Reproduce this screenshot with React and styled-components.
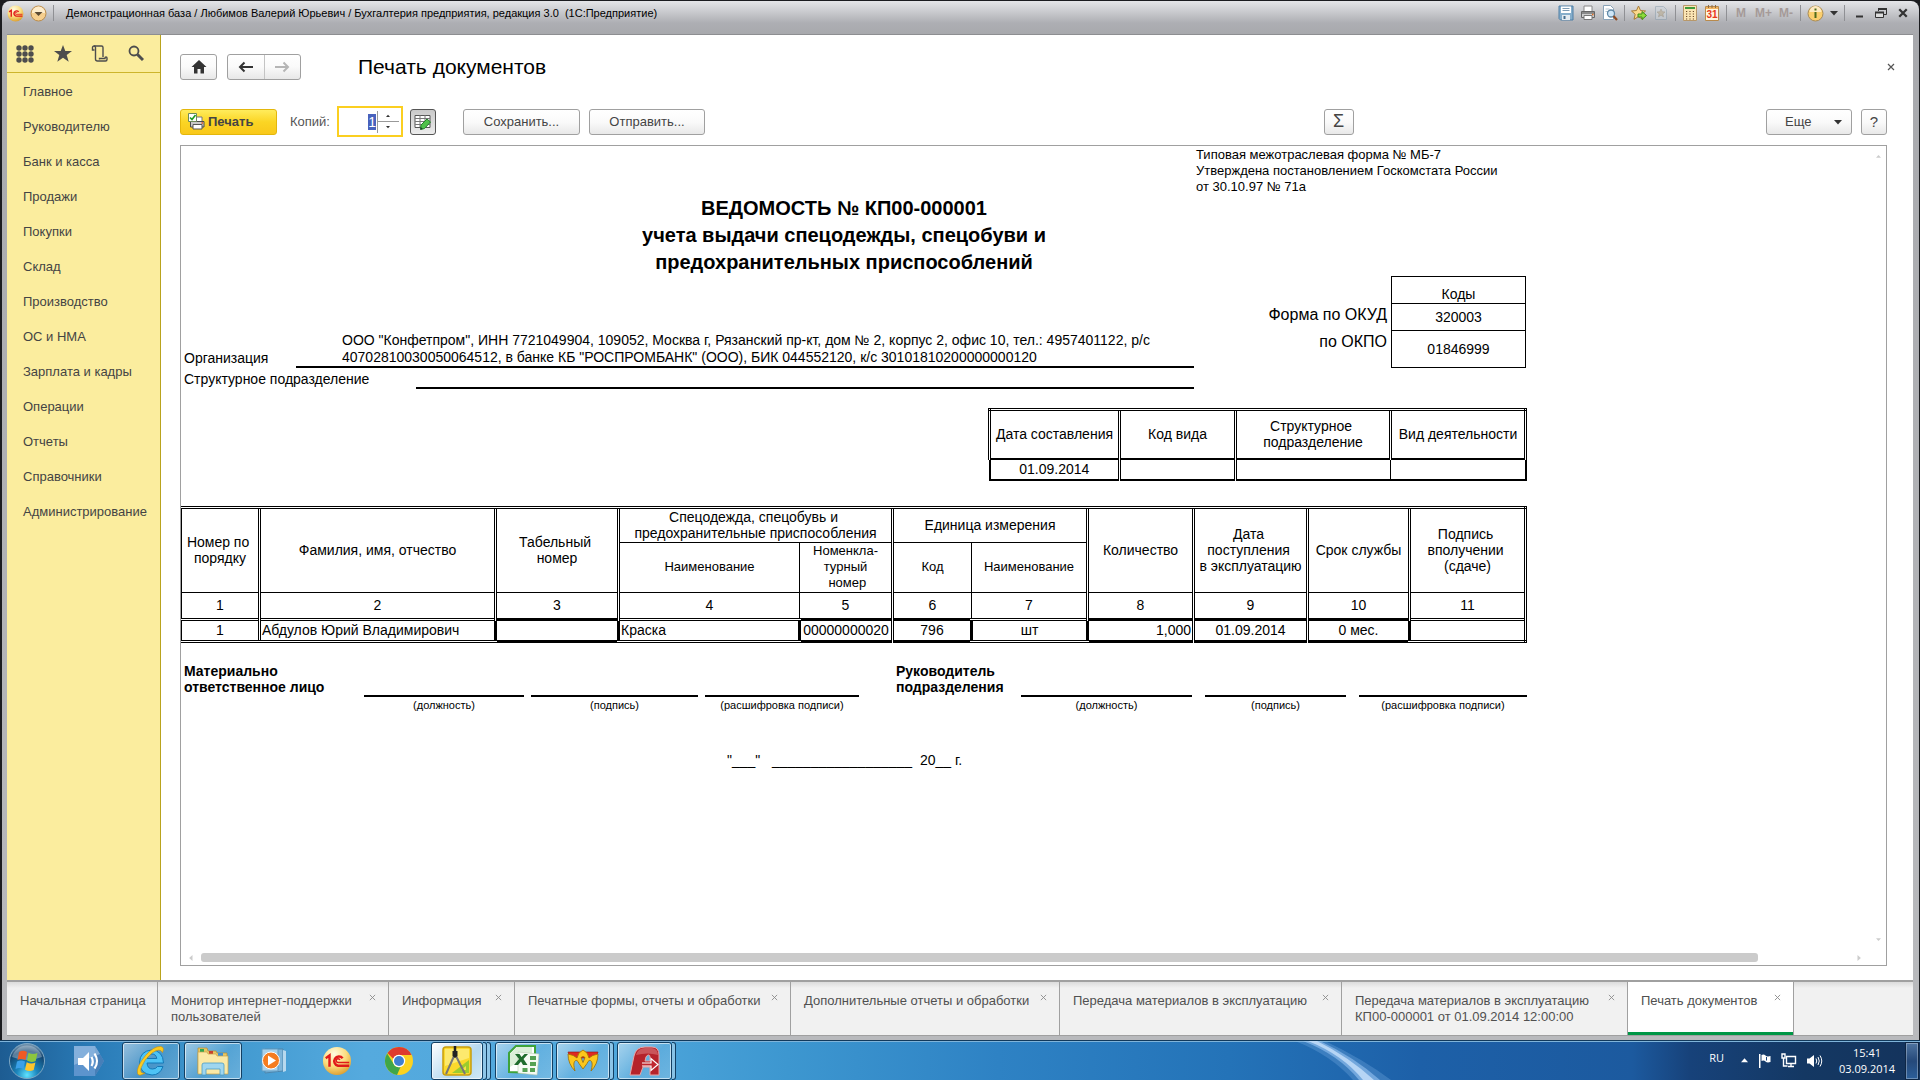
import React, { useEffect, useRef, useState } from "react";
import styled, { createGlobalStyle, css } from "styled-components";

const GlobalStyle = createGlobalStyle`
  * {
    box-sizing: border-box;
  }
  body {
    margin: 0;
    background: #1b1c1f;
    font-family: "Liberation Sans", Arial, sans-serif;
    font-size: 13px;
    color: #444;
  }
  button, input {
    font: inherit;
    color: inherit;
    margin: 0;
  }
  button {
    cursor: pointer;
  }
  svg {
    display: block;
    flex: none;
  }
`;

/* Window */

const Desktop = styled.div`
  height: 100vh;
  display: flex;
  flex-direction: column;
  overflow: hidden;
`;

const AppWindow = styled.div`
  flex: 1;
  min-height: 0;
  margin: 1px 1px 0 2px;
  padding: 0 6px 4px 5px;
  display: flex;
  flex-direction: column;
  border-radius: 8px 8px 0 0;
  background: linear-gradient(#e4e5e8 0, #cbccd0 10px, #adaeb3 22px, #a8a9ad 33px, #b9babd 100%);
`;

const TitleBar = styled.header`
  height: 33px;
  padding: 0 0 9px;
  display: flex;
  align-items: center;
  gap: 6px;
  font-size: 11px;
  color: #000;
`;

const TitleText = styled.span`
  flex: 1;
  white-space: pre;
`;

const TitleSep = styled.span`
  width: 1px;
  height: 16px;
  background: #8f9094;
`;

const TitleTools = styled.div`
  display: flex;
  align-items: center;
  gap: 6px;
  padding-right: 2px;
`;

const ToolButton = styled.button`
  min-width: 16px;
  height: 20px;
  padding: 0;
  display: flex;
  align-items: center;
  justify-content: center;
  border: none;
  background: none;
  color: #a59a98;
  font-weight: bold;
  font-size: 12px;
`;

const Workspace = styled.div`
  flex: 1;
  min-height: 0;
  display: flex;
  border-top: 1px solid #8d8e91;
  background: #fff;
`;

/* Sidebar */

const Sidebar = styled.nav`
  width: 154px;
  flex: none;
  background: #fbed9e;
  border-right: 1px solid #b9a31d;
`;

const SidebarIcons = styled.div`
  height: 38px;
  padding: 0 16px 0 9px;
  display: flex;
  align-items: center;
  justify-content: space-between;
  border-bottom: 1px solid #cdb52c;
`;

const IconButton = styled.button`
  padding: 0;
  border: none;
  background: none;
`;

const SidebarList = styled.ul`
  list-style: none;
  margin: 0;
  padding: 1px 0 0 16px;
`;

const SidebarLink = styled.a`
  display: block;
  line-height: 35px;
  color: #444;
  text-decoration: none;
`;

/* Main form */

const Main = styled.main`
  flex: 1;
  min-width: 0;
  padding: 18px 26px 14px 19px;
  display: flex;
  flex-direction: column;
`;

const FormHeader = styled.div`
  height: 27px;
  display: flex;
  align-items: center;
  gap: 10px;
`;

const FormTitle = styled.h1`
  flex: 1;
  margin: 0 0 0 47px;
  font-size: 21px;
  line-height: 27px;
  font-weight: normal;
  color: #000;
`;

const buttonLook = css`
  height: 26px;
  border: 1px solid #a0a0a0;
  border-radius: 3px;
  background: linear-gradient(#fff, #fafafa 50%, #e8e8e8);
  display: flex;
  align-items: center;
  justify-content: center;
`;

const Button = styled.button`
  ${buttonLook}
  width: ${({ $width }) => $width}px;
  padding: 0;
  font-size: ${({ $size }) => $size || 13}px;
  ${({ $pressed }) =>
    $pressed &&
    css`
      border-color: #555;
      background: linear-gradient(#c9c9c9, #ececec);
    `}
`;

const PrintButton = styled(Button)`
  padding-left: 7px;
  gap: 3px;
  justify-content: flex-start;
  border-color: #e3b70c;
  background: linear-gradient(#ffec5c, #fbd524 50%, #f9c81a);
  font-weight: bold;
`;

const MoreButton = styled(Button)`
  padding: 0 9px 0 18px;
  justify-content: space-between;
`;

const NavGroup = styled.div`
  ${buttonLook}
  width: 74px;
`;

const NavButton = styled.button`
  flex: 1;
  height: 24px;
  padding: 0;
  display: flex;
  align-items: center;
  justify-content: center;
  border: none;
  background: none;
  & + & {
    border-left: 1px solid #c4c4c4;
  }
`;

const CloseForm = styled(IconButton)`
  width: 14px;
  height: 20px;
  margin-right: -11px;
  display: flex;
  align-items: center;
  justify-content: center;
`;

const Toolbar = styled.div`
  height: 31px;
  margin: 26px 0 8px;
  display: flex;
  align-items: center;
`;

const CopiesLabel = styled.label`
  margin: 0 7px 0 13px;
  color: #555;
`;

const CopiesBox = styled.div`
  width: 66px;
  height: 31px;
  margin-right: 7px;
  padding: 2px;
  display: flex;
  align-items: center;
  border: 2px solid #fbcf20;
  background: #fff;
`;

const CopiesInput = styled.input`
  width: 35px;
  padding: 0;
  border: none;
  outline: none;
  text-align: right;
  font-size: 14px;
  &::selection {
    background: #4862bd;
    color: #fff;
  }
`;

const Spinner = styled.div`
  flex: 1;
  height: 22px;
  margin-left: 1px;
  display: flex;
  flex-direction: column;
  border-left: 1px solid #999;
`;

const SpinnerButton = styled.button`
  flex: 1;
  padding: 0;
  display: flex;
  align-items: center;
  justify-content: center;
  border: none;
  background: none;
  & + & {
    border-top: 1px solid #999;
  }
`;

const ToolbarGap = styled.div`
  flex: ${({ $grow }) => $grow || "none"};
  width: ${({ $width }) => $width || 0}px;
`;

/* Print preview */

const Preview = styled.section`
  flex: 1;
  min-height: 0;
  display: flex;
  flex-direction: column;
  border: 1px solid #a0a0a0;
`;

const PreviewBody = styled.div`
  flex: 1;
  min-height: 0;
  display: flex;
`;

const PreviewScroll = styled.div`
  flex: 1;
  min-width: 0;
  overflow: hidden;
`;

const VerticalRail = styled.div`
  width: 16px;
  padding: 8px 0;
  display: flex;
  flex-direction: column;
  align-items: center;
  justify-content: space-between;
`;

const HorizontalRail = styled.div`
  height: 15px;
  padding: 0 24px 0 7px;
  display: flex;
  align-items: center;
  gap: 7px;
`;

const Track = styled.div`
  flex: 1;
`;

const Thumb = styled.div`
  width: calc(100% - 91px);
  height: 9px;
  border-radius: 3px;
  background: #cbcbcb;
`;

/* Printed sheet */

const Sheet = styled.article`
  width: 1346px;
  padding-top: 1px;
  color: #000;
  font-size: 14px;
  line-height: 16px;
`;

const FormNote = styled.p`
  margin: 0 0 0 1015px;
  font-size: 13px;
`;

const SheetTitle = styled.h2`
  margin: 0;
  padding-right: 20px;
  text-align: center;
  font-size: 20px;
  line-height: 27px;
`;

const Requisites = styled.div`
  padding-right: 1px;
  display: flex;
  align-items: flex-end;
  justify-content: space-between;
`;

const LineRow = styled.div`
  width: 1013px;
  display: flex;
  align-items: flex-end;
`;

const LineLabel = styled.span`
  width: ${({ $width }) => $width}px;
  padding-left: 3px;
  line-height: 20px;
`;

const LineValue = styled.span`
  flex: 1;
  min-height: 21px;
  padding-left: 46px;
  line-height: 17px;
  border-bottom: 2px solid #000;
`;

const CodesTable = styled.table`
  border-collapse: collapse;
  th {
    padding: 0 4px 0 0;
    font-size: 16px;
    font-weight: normal;
    text-align: right;
    vertical-align: top;
    line-height: 22px;
  }
  td {
    width: 134px;
    height: 27px;
    padding: 0;
    border: 1px solid #000;
    text-align: center;
  }
  tr:first-child td {
    padding-top: 8px;
  }
  tr:last-child td {
    height: 37px;
  }
`;

const edges = {
  s: "1px solid #000",
  d: "3px double #000",
  m: "2px solid #000",
  k: "3px solid #000",
};

const SheetTable = styled.table`
  width: ${({ $width }) => $width}px;
  margin: ${({ $top }) => $top}px 0 0 auto;
  table-layout: fixed;
  border-collapse: collapse;
`;

/* $top, $left, $right, $bottom name a line style from edges */
const cellLook = css`
  height: ${({ $height }) => $height}px;
  padding: 0 1px;
  font-size: ${({ $small }) => ($small ? 13 : 14)}px;
  font-weight: normal;
  text-align: ${({ $align }) => $align || "center"};
  white-space: pre;
  border-top: ${({ $top }) => edges[$top] || "none"};
  border-left: ${({ $left }) => edges[$left] || "none"};
  border-right: ${({ $right }) => edges[$right] || "none"};
  border-bottom: ${({ $bottom }) => edges[$bottom] || "none"};
`;

const HeadCell = styled.th`
  ${cellLook}
`;

const Cell = styled.td`
  ${cellLook}
`;

const Signatures = styled.div`
  margin-top: 20px;
  display: flex;
  justify-content: space-between;
`;

const SignGroup = styled.div`
  display: grid;
  grid-template-columns: ${({ $columns }) => $columns};
  column-gap: ${({ $gap }) => $gap}px;
`;

const SignLabel = styled.strong`
  padding-left: 3px;
  white-space: pre;
`;

const SignLine = styled.span`
  margin-top: 32px;
  border-top: 2px solid #000;
  text-align: center;
  font-size: 11px;
`;

const SheetDate = styled.p`
  margin: 39px 0 0 546px;
  white-space: pre;
`;

/* Opened forms */

const TabBar = styled.div`
  height: 56px;
  display: flex;
  border-top: 2px solid #a0a0a0;
  border-bottom: 1px solid #a0a0a0;
  background: linear-gradient(#dcdcdc, #f1f1f1 6px);
`;

const TabItem = styled.div`
  width: ${({ $width }) => $width}px;
  padding: 11px 11px 0 13px;
  display: flex;
  justify-content: space-between;
  align-items: flex-start;
  border-right: 1px solid #a0a0a0;
  ${({ $active }) =>
    $active &&
    css`
      background: #fff;
      box-shadow: inset 0 -3px #009646;
    `}
`;

const TabLabel = styled.button`
  padding: 0;
  border: none;
  background: none;
  text-align: left;
  white-space: pre;
  line-height: 16px;
  color: #505050;
`;

const TabClose = styled(IconButton)`
  width: 10px;
  height: 8px;
  display: flex;
  align-items: center;
  justify-content: center;
`;

/* Taskbar */

const Taskbar = styled.footer`
  height: 40px;
  padding: 0 1px 0 8px;
  display: flex;
  align-items: center;
  border-top: 1px solid #123a5c;
  box-shadow: inset 0 1px #7fb4da;
  background: linear-gradient(
    90deg,
    #1d5c92 0,
    #2a7cb8 5%,
    #3f97ce 11%,
    #55aade 19%,
    #4fa7dc 32%,
    #3d97d0 41%,
    #2e82c4 52%,
    #2473b8 64%,
    #1d60a8 74%,
    #1c5a9f 85%,
    #17427a 88%,
    #143863 94%,
    #14335c 100%
  );
  position: relative;
  color: #fff;
`;

const Streak = styled.svg`
  position: absolute;
  left: 66%;
  top: 0;
`;

const TaskButton = styled.button`
  width: ${({ $width }) => $width || 58}px;
  height: 38px;
  padding: 0;
  margin-left: ${({ $gap }) => $gap || 0}px;
  display: flex;
  align-items: center;
  justify-content: center;
  border: 1px solid transparent;
  border-radius: 3px;
  background: none;
  ${({ $open }) =>
    $open &&
    css`
      border-color: #123f63;
      background: linear-gradient(135deg, rgba(255, 255, 255, 0.5), rgba(255, 255, 255, 0.1) 55%, rgba(255, 255, 255, 0.2));
      box-shadow: inset 0 0 0 1px rgba(255, 255, 255, 0.6);
    `}
  ${({ $active }) =>
    $active &&
    css`
      background: linear-gradient(135deg, #fdfeff, #b5d9ef 60%, #cfe8f6);
    `}
`;

/* Edge of the windows stacked behind a task button */
const StackEdge = styled.span`
  width: 4px;
  height: 38px;
  border: 1px solid #123f63;
  border-left: none;
  border-radius: 0 3px 3px 0;
  background: rgba(255, 255, 255, 0.35);
`;

const Tray = styled.div`
  margin-left: auto;
  display: flex;
  align-items: center;
  font-family: "Open Sans", "Noto Sans", sans-serif;
  font-size: 11px;
`;

const Language = styled.span`
  padding-bottom: 6px;
`;

const TrayIcons = styled.div`
  width: 82px;
  margin: 0 0 0 17px;
  display: flex;
  align-items: center;
  justify-content: space-between;
`;

const Clock = styled.div`
  width: 58px;
  margin: 0 9px 0 15px;
  text-align: center;
  line-height: 16px;
`;

const ShowDesktop = styled.button`
  width: 14px;
  height: 38px;
  padding: 0;
  border: 1px solid #0e2644;
  background: linear-gradient(#4f74a0, #25497a 50%, #2c5f9a);
  box-shadow: inset 0 0 0 1px rgba(255, 255, 255, 0.3);
`;

/* Icons */

const CrossIcon = ({ size = 8, color = "#555", width = 1.2 }) => (
  <svg width={size} height={size} viewBox="0 0 8 8" stroke={color} strokeWidth={width}>
    <path d="M1 1l6 6M7 1l-6 6" />
  </svg>
);

const TriangleIcon = ({ turn = 0, size = 7, color = "#333" }) => (
  <svg width={size} height={size} viewBox="0 0 8 8" fill={color}>
    <path d="M0 2h8L4 6.5z" transform={`rotate(${turn} 4 4)`} />
  </svg>
);

const OneCIcon = ({ size }) => (
  <svg width={size} height={size} viewBox="0 0 32 32">
    <defs>
      <radialGradient id="onec" cx="40%" cy="25%" r="80%">
        <stop offset="0" stopColor="#fffbe0" />
        <stop offset="0.55" stopColor="#fbdc7c" />
        <stop offset="1" stopColor="#d99a2a" />
      </radialGradient>
    </defs>
    <circle cx="16" cy="16" r="15" fill="url(#onec)" />
    <g fill="none" stroke="#e01a1a" strokeWidth="2.6">
      <path d="M4 13l4-3v12" />
      <path d="M22 13a5 5 0 1 0-5 8h12" />
      <path d="M19 15a2 2 0 1 0-2 2.500h12" strokeWidth="1.600" />
    </g>
  </svg>
);

const MenuBallIcon = () => (
  <svg width="17" height="17" viewBox="0 0 17 17">
    <circle cx="8.5" cy="8.5" r="7.500" fill="#f6cf8e" stroke="#b98b4c" />
    <path d="M2 8a6.500 6.500 0 0 1 13 0z" fill="#fdeccb" />
    <path d="M4.500 7h8L8.500 11z" fill="#5b4a34" />
  </svg>
);

const SaveIcon = () => (
  <svg width="16" height="16" viewBox="0 0 16 16">
    <path d="M1 1h14v14H2.500L1 13.500z" fill="#86aecb" stroke="#4f7fa5" />
    <path d="M3 1.500h10V8H3z" fill="#fff" />
    <path d="M4.500 3.500h7M4.500 5.500h7" stroke="#7d9cb5" />
    <path d="M4 10h8v5H4z" fill="#e3ebf1" />
    <path d="M5.500 11h2v3h-2z" fill="#466e8e" />
  </svg>
);

const PrinterIcon = () => (
  <svg width="16" height="16" viewBox="0 0 16 16">
    <path d="M4 1h8v6H4z" fill="#fff" stroke="#888" />
    <path d="M1.500 6.500h13v6h-13z" fill="#cfcfcf" stroke="#666" />
    <path d="M2 7h12v2H2z" fill="#8b8b8b" />
    <path d="M4 10.500h8v4H4z" fill="#fff" stroke="#777" />
    <path d="M12 9.500h1.500" stroke="#e46a1a" strokeWidth="1.500" />
  </svg>
);

const PrintCheckIcon = () => (
  <svg width="17" height="17" viewBox="0 0 17 17">
    <path d="M6 4h8v5H6z" fill="#fff" stroke="#777" />
    <path d="M2.500 8.500h13.500v5.500H2.500z" fill="#c9c9c9" stroke="#4c4c4c" />
    <path d="M5 11.500h9v4.500H5z" fill="#fff" stroke="#555" />
    <path d="M.5.5h8v8h-8z" fill="#fff" stroke="#6d8a5a" />
    <path d="M2 4.500l2 2 3.500-4.500" fill="none" stroke="#1f9a1f" strokeWidth="1.600" />
    <path d="M13.500 10h1.500" stroke="#e4501a" strokeWidth="1.500" />
  </svg>
);

const PreviewIcon = () => (
  <svg width="16" height="16" viewBox="0 0 16 16">
    <path d="M1.500.5h7l3 3v11h-10z" fill="#fff" stroke="#8aa3b8" />
    <path d="M3.500 4h4M3.500 6.500h3" stroke="#b5c5d2" />
    <circle cx="9" cy="8.500" r="3.500" fill="#cfe6f7" stroke="#5f87a5" strokeWidth="1.300" />
    <path d="M11.500 11l3.500 4" stroke="#8e4a22" strokeWidth="2.200" />
  </svg>
);

const StarGoIcon = () => (
  <svg width="16" height="16" viewBox="0 0 16 16">
    <path d="M7.500 1l2 4.500 5 .5-3.700 3.300 1 5-4.300-2.600L3 14.300l1.200-5L.5 6l5-.5z" fill="#fbd98c" stroke="#a87a35" />
    <path d="M7 9h4V6.500l4.500 4-4.500 4V12H7z" fill="#8fdc3a" stroke="#3c8a18" />
  </svg>
);

const StarPageIcon = () => (
  <svg width="14" height="16" viewBox="0 0 14 16" opacity="0.55">
    <path d="M1.500 1.500h8l3 3v10h-11z" fill="#cbd3da" stroke="#8c9fae" />
    <path d="M7 4l1.200 2.700 2.800.3-2.200 1.900.7 2.900L7 10.300l-2.500 1.500.7-2.900L3 7l2.800-.3z" fill="#b7a98c" stroke="#8d8068" strokeWidth="0.600" />
  </svg>
);

const CalcIcon = () => (
  <svg width="14" height="16" viewBox="0 0 14 16">
    <path d="M.5.500h13v15H.5z" fill="#fbe5b4" stroke="#b8986a" />
    <path d="M2 2h10v2H2z" fill="#3f9a3a" />
    <path d="M3 6.500h8M3 9h8M3 11.500h8M3 14h8" stroke="#6e4c2c" strokeWidth="1.200" strokeDasharray="1.200 2.200" />
  </svg>
);

const CalendarIcon = () => (
  <svg width="14" height="16" viewBox="0 0 14 16">
    <path d="M.5 1.500h13v14H.5z" fill="#fff6df" stroke="#b88a4d" />
    <path d="M1 2h12v2H1z" fill="#f3b45e" />
    <path d="M3.500 0v3M7 0v3M10.500 0v3" stroke="#8b6a44" />
    <text x="7" y="13" fontSize="10" fontFamily="Liberation Sans" textAnchor="middle" fill="#e8381b">31</text>
  </svg>
);

const InfoIcon = () => (
  <svg width="17" height="17" viewBox="0 0 17 17">
    <circle cx="8.500" cy="8.500" r="7.500" fill="#fbcf6e" stroke="#a98b55" />
    <path d="M2.500 7a6 6 0 0 1 12 0z" fill="#feeac0" />
    <path d="M8.500 3.500v2M8.500 7v6" stroke="#4d6b1c" strokeWidth="2" />
  </svg>
);

const MinimizeIcon = () => (
  <svg width="12" height="12" viewBox="0 0 12 12">
    <path d="M3 9.500h7" stroke="#333" strokeWidth="2" />
  </svg>
);

const RestoreIcon = () => (
  <svg width="12" height="12" viewBox="0 0 12 12" fill="none" stroke="#333">
    <path d="M3.500 4V2.500h8v5H9" />
    <path d="M3 2h9" strokeWidth="2" />
    <path d="M.5 5.500h8v5h-8z" fill="#ddd" />
    <path d="M0 5.500h9" strokeWidth="2" />
  </svg>
);

const GridIcon = () => (
  <svg width="18" height="18" viewBox="0 0 18 18" fill="#4d4d4d">
    {[3, 9, 15].map((y) => [3, 9, 15].map((x) => <circle key={`${x}-${y}`} cx={x} cy={y} r="2.700" />))}
  </svg>
);

const StarIcon = () => (
  <svg width="18" height="17" viewBox="0 0 18 17" fill="#4d4d4d">
    <path d="M9 0l2.300 6H18l-5.300 4 2 6.700L9 12.700 3.300 16.700l2-6.700L0 6h6.700z" />
  </svg>
);

const ScrollIcon = () => (
  <svg width="17" height="17" viewBox="0 0 17 17" fill="none" stroke="#4d4d4d" strokeWidth="1.400">
    <path d="M3.500 5H1.500V2.500a1.500 1.500 0 0 1 1.500-1.500h7.500a1.500 1.500 0 0 1 1.500 1.500v9.500" />
    <path d="M3 1a1.500 1.500 0 0 1 1.500 1.500v11.500a2 2 0 0 0 2 2h8a1.500 1.500 0 0 0 1.500-1.500v-1.500a1 1 0 0 0-2 0v.5H8.500v1" />
  </svg>
);

const SearchIcon = () => (
  <svg width="16" height="17" viewBox="0 0 16 17" fill="none" stroke="#4d4d4d">
    <circle cx="6" cy="6" r="4.500" strokeWidth="1.800" />
    <path d="M9.500 9.500l5.500 5.500" strokeWidth="3" />
  </svg>
);

const HomeIcon = () => (
  <svg width="16" height="14" viewBox="0 0 16 14" fill="#333">
    <path d="M8 0l7.500 7H13v6.500H9.500V9h-3v4.500H3V7H.5z" />
  </svg>
);

const ArrowIcon = ({ flip, color }) => (
  <svg width="16" height="12" viewBox="0 0 16 12" stroke={color} fill="none" strokeWidth="2">
    <path d="M15 6H3M6.500 1.500L2 6l4.500 4.500" transform={flip ? "rotate(180 8 6)" : undefined} />
  </svg>
);

const TableEditIcon = () => (
  <svg width="17" height="16" viewBox="0 0 17 16">
    <path d="M1 1.500h15v12H1z" fill="#fff" stroke="#555" />
    <path d="M1 4.500h15M1 7.500h15M1 10.500h15M6 1v12M11 1v12" stroke="#777" />
    <path d="M6.500 15.500l.5-4.500 6-6L16.500 8l-6 6.500z" fill="#4fc24a" stroke="#23812a" />
    <path d="M6.500 15.500l.3-2.500 2 2z" fill="#233" />
  </svg>
);

const StartOrb = () => (
  <svg width="38" height="38" viewBox="0 0 38 38">
    <defs>
      <radialGradient id="orb" cx="50%" cy="90%" r="85%">
        <stop offset="0" stopColor="#5fe3ff" />
        <stop offset="0.350" stopColor="#1c86bd" />
        <stop offset="0.800" stopColor="#12446f" />
        <stop offset="1" stopColor="#6c8ea9" />
      </radialGradient>
    </defs>
    <circle cx="19" cy="19" r="17.500" fill="url(#orb)" stroke="#7fa8c4" />
    <path d="M4 15a15.500 15.500 0 0 1 30 0q-15 6-30 0z" fill="#fff" opacity="0.300" />
    <path d="M11 10q4-2.500 8 0l-1.500 8q-4-2-8 0z" fill="#ef5a24" />
    <path d="M20.500 10.700q4 2.500 9 .3l-1.800 8q-4.500 2-8.700-.5z" fill="#8cc63e" />
    <path d="M9 19.500q4-2 8 0L15.500 27q-4-2-8 0z" fill="#3aa0e8" />
    <path d="M18.700 20.200q4.300 2.300 8.700.3L25.700 28q-4.500 2-8.700-.3z" fill="#fcc52c" />
  </svg>
);

const SpeakerAppIcon = () => (
  <svg width="32" height="32" viewBox="0 0 32 32">
    <path d="M1 1h21l9 15-9 15H1z" fill="#5d94cd" />
    <path d="M22 1l9 15-9 15z" fill="#477fb8" />
    <path d="M1 1h21l5 8L1 20z" fill="#9ec3e6" opacity="0.600" />
    <path d="M5 13h5l6-6v19l-6-6H5z" fill="#fff" />
    <path d="M18.500 12q2.500 4.500 0 9M21.500 8.500q5 8 0 15" fill="none" stroke="#fff" strokeWidth="2.200" />
  </svg>
);

const ExplorerEIcon = () => (
  <svg width="32" height="34" viewBox="0 0 32 34">
    <path d="M28.500 19H12q.5 6 5.500 6 3.500 0 5-2.500h5.500Q25 31 17 31 5 30 4.500 18.500 5 7 16.500 6 28 6.500 28.500 19zM12.200 14.500h9.600q-.800-4.500-4.800-4.500t-4.800 4.500z" fill="#4ec3f5" stroke="#1379b8" />
    <path d="M27.500 8.500Q30 3 25.500 2.500 19 2 10.500 11.500 1 23 2.500 29.500 4 33 10 29 4.500 30 6 24 9 15.500 17 9 25 3.500 27.500 8.500z" fill="#fccb20" stroke="#c88d0e" strokeWidth="0.600" />
  </svg>
);

const FolderIcon = () => (
  <svg width="34" height="32" viewBox="0 0 34 32">
    <path d="M2 3h9l1 3h8l1 2h10v20H2z" fill="#e8c765" stroke="#b48d30" strokeWidth="0.700" />
    <path d="M4 4h4v3H4z" fill="#2fa84f" />
    <path d="M13 6h4v3h-4z" fill="#c9402d" />
    <path d="M22 8h5v3h-5z" fill="#3d8fd6" />
    <path d="M2 7h9l1 2h8l1 2h11v18H2z" fill="#fbe9a6" stroke="#c9a54a" strokeWidth="0.700" />
    <path d="M6 30V20q0-2 2-2h18q2 0 2 2v10h-4v-6H10v6z" fill="#9fd6ef" stroke="#4b9cc4" strokeWidth="0.800" />
  </svg>
);

const MediaIcon = () => (
  <svg width="30" height="28" viewBox="0 0 30 28">
    <path d="M6 2h18v22l-18 2z" fill="#7fb6da" stroke="#4d86ad" />
    <path d="M24 3l3 1v20l-3 1z" fill="#b8d9ee" />
    <path d="M3 2h16v22H3z" fill="#a9d2ec" stroke="#5e9cc4" />
    <circle cx="12" cy="13.500" r="8.500" fill="#f57c20" stroke="#fff" />
    <path d="M9 8.500l8 5-8 5z" fill="#fff" />
  </svg>
);

const ChromeIcon = () => (
  <svg width="28" height="28" viewBox="0 0 28 28">
    <circle cx="14" cy="14" r="14" fill="#fcd21f" />
    <path d="M14 0A14 14 0 0 1 26.500 8H14a6 6 0 0 0-5.500 4L2.500 6A14 14 0 0 1 14 0z" fill="#de3b2e" />
    <path d="M2.200 6.500L8.700 17a6 6 0 0 0 6.800 3L12 27.900A14 14 0 0 1 2.200 6.500z" fill="#3fa648" />
    <circle cx="14" cy="14" r="6.200" fill="#fff" />
    <circle cx="14" cy="14" r="5" fill="#3f7fd0" />
  </svg>
);

const CompassIcon = () => (
  <svg width="30" height="30" viewBox="0 0 30 30">
    <rect x="1" y="1" width="28" height="28" rx="3" fill="#fbd92c" stroke="#c79d0c" strokeWidth="1.500" />
    <path d="M3 3h24v9L3 20z" fill="#fdf08a" opacity="0.700" />
    <path d="M10 27L27 14v13z" fill="#9ccc2e" />
    <path d="M19 24l5-4v4z" fill="#f5e14a" />
    <path d="M12.500 9L4 28M13.500 9L23 28" stroke="#777" strokeWidth="2" />
    <path d="M13 0v5" stroke="#222" strokeWidth="2.500" />
    <path d="M10.500 5h5v5l-2.500 2-2.500-2z" fill="#222" />
  </svg>
);

const ExcelIcon = () => (
  <svg width="32" height="32" viewBox="0 0 32 32">
    <path d="M8 1h19v27L1 27V8z" fill="#fff" stroke="#3ea33a" strokeWidth="2" />
    <path d="M2 9l7-7h15v6L2 22z" fill="#dcefd8" />
    <path d="M10 7l21 2-2 21-19-2z" fill="#f5faf3" stroke="#b8ccb4" strokeWidth="0.600" />
    <path d="M22 11h6v4h-6zM22 17h6v4h-6zM22 23h5v4h-5zM14.500 23h5v4h-5z" fill="#55a154" />
    <path d="M7 9h4.500l2 3 3-3H20l-4.500 5 4 6H15l-2-3.500L10 20H6l5-6z" fill="#1f6b2c" />
  </svg>
);

const CrownIcon = () => (
  <svg width="34" height="24" viewBox="0 0 34 24">
    <path d="M2 3h30l-2 6H4z" fill="#df2a22" stroke="#8e1512" strokeWidth="0.600" />
    <path
      d="M2 5Q2 15 9 22 7 15 8.500 12.500 11 9.500 13 14.500L17 20l4-5.500q2-5 4.500-2Q27 15 25 22 32 15 32 5q-6 1-9 4-1-6-6-8-5 2-6 8-3-3-9-4zM15 8.500q2-2 4 0l-2 5z"
      fill="#fcc71c"
      fillRule="evenodd"
      stroke="#9a6d08"
      strokeWidth="0.800"
    />
  </svg>
);

const AccessAIcon = () => (
  <svg width="34" height="32" viewBox="0 0 34 32">
    <path
      d="M2 30L6 11Q8 2 17 2h7q7 0 7 8v20h-9v-8h-7l-3 8zM17 16h5v-4q0-2-1.500-2t-2.500 2z"
      fill="#b5232b"
      fillRule="evenodd"
      stroke="#e9a5a5"
      strokeWidth="1"
    />
    <path d="M8 10q2-7 9-7h7q6 1 6 7-10-3-22 0z" fill="#d8777a" opacity="0.600" />
    <path d="M14 18h9v-4.500l7 6-7 6V21h-9" fill="#c0272f" stroke="#fff" strokeWidth="1.200" />
  </svg>
);

const FlagIcon = () => (
  <svg width="14" height="14" viewBox="0 0 14 14" fill="#fff">
    <path d="M1 0h1.500v14H1zM3.500 1q2.500-1 4 .5t5 .5v6q-3.500 1-5-.5t-4-.5z" />
    <path d="M8.500 3v3.500" stroke="#17427a" />
  </svg>
);

const NetworkIcon = () => (
  <svg width="16" height="15" viewBox="0 0 16 15" fill="none" stroke="#fff" strokeWidth="1.400">
    <path d="M5.500 3.500h9v7h-9zM10 10.500v2.500M7 13.500h6" />
    <path d="M1 1h3v4H1zM2.500 5v8h4" />
  </svg>
);

const VolumeIcon = () => (
  <svg width="16" height="14" viewBox="0 0 16 14">
    <path d="M0 4.500h2.500L7 1v12L2.500 9.500H0z" fill="#fff" />
    <path d="M9 4.500q1.500 2.500 0 5M11 3q2.500 4 0 8M13 1.500q3.500 5.500 0 11" fill="none" stroke="#fff" />
  </svg>
);

/* Data */

const sections = [
  "Главное",
  "Руководителю",
  "Банк и касса",
  "Продажи",
  "Покупки",
  "Склад",
  "Производство",
  "ОС и НМА",
  "Зарплата и кадры",
  "Операции",
  "Отчеты",
  "Справочники",
  "Администрирование",
];

const tabs = [
  { title: "Начальная страница", width: 151, fixed: true },
  { title: "Монитор интернет-поддержки\nпользователей", width: 231 },
  { title: "Информация", width: 126 },
  { title: "Печатные формы, отчеты и обработки", width: 276 },
  { title: "Дополнительные отчеты и обработки", width: 269 },
  { title: "Передача материалов в эксплуатацию", width: 282 },
  { title: "Передача материалов в эксплуатацию\nКП00-000001 от 01.09.2014 12:00:00", width: 286 },
  { title: "Печать документов", width: 166, active: true },
];

const infoColumns = [130, 116, 155, 135];
const issueColumns = [78, 236, 123, 181, 93, 79, 116, 106, 114, 102, 116];

/* line style on the left side of each column, for number row */
const numberLefts = ["s", "d", "d", "d", "s", "d", "s", "d", "d", "d", "d"];

const issueRow = [
  { text: "1", left: "s", line: "d" },
  { text: "Абдулов Юрий Владимирович", left: "d", line: "d", align: "left" },
  { text: "", left: "k", line: "k" },
  { text: "Краска", left: "k", line: "d", align: "left" },
  { text: "00000000020", left: "k", line: "k" },
  { text: "796", left: "d", line: "k" },
  { text: "шт", left: "k", line: "d" },
  { text: "1,000", left: "k", line: "k", align: "right" },
  { text: "01.09.2014", left: "d", line: "k" },
  { text: "0 мес.", left: "d", line: "k" },
  { text: "", left: "k", line: "d" },
];

const Columns = ({ widths }) => (
  <colgroup>
    {widths.map((width, i) => (
      <col key={i} width={width} />
    ))}
  </colgroup>
);

const sum = (list) => list.reduce((a, b) => a + b, 0);

const WindowTitle = () => (
  <TitleBar>
    <OneCIcon size={17} />
    <MenuBallIcon />
    <TitleSep />
    <TitleText>{"  Демонстрационная база / Любимов Валерий Юрьевич / Бухгалтерия предприятия, редакция 3.0  (1С:Предприятие)"}</TitleText>
    <TitleTools>
      <ToolButton aria-label="Сохранить"><SaveIcon /></ToolButton>
      <ToolButton aria-label="Печать"><PrinterIcon /></ToolButton>
      <ToolButton aria-label="Просмотр"><PreviewIcon /></ToolButton>
      <TitleSep />
      <ToolButton aria-label="Избранное"><StarGoIcon /></ToolButton>
      <ToolButton aria-label="Добавить в избранное"><StarPageIcon /></ToolButton>
      <TitleSep />
      <ToolButton aria-label="Калькулятор"><CalcIcon /></ToolButton>
      <ToolButton aria-label="Календарь"><CalendarIcon /></ToolButton>
      <TitleSep />
      <ToolButton>M</ToolButton>
      <ToolButton>M+</ToolButton>
      <ToolButton>M-</ToolButton>
      <TitleSep />
      <ToolButton aria-label="Справка"><InfoIcon /></ToolButton>
      <TriangleIcon size={8} />
      <TitleSep />
      <ToolButton aria-label="Свернуть"><MinimizeIcon /></ToolButton>
      <ToolButton aria-label="Восстановить"><RestoreIcon /></ToolButton>
      <ToolButton aria-label="Закрыть"><CrossIcon size={10} color="#333" width={1.8} /></ToolButton>
    </TitleTools>
  </TitleBar>
);

const Copies = () => {
  const [copies, setCopies] = useState("1");
  const input = useRef(null);

  useEffect(() => {
    input.current.focus();
    input.current.select();
  }, []);

  const step = (n) => setCopies(String(Math.max(1, Number(copies) + n)));

  return (
    <>
      <CopiesLabel htmlFor="copies">Копий:</CopiesLabel>
      <CopiesBox>
        <CopiesInput id="copies" ref={input} value={copies} onChange={(e) => setCopies(e.target.value)} />
        <Spinner>
          <SpinnerButton aria-label="Больше" onClick={() => step(1)}><TriangleIcon turn={180} size={4} /></SpinnerButton>
          <SpinnerButton aria-label="Меньше" onClick={() => step(-1)}><TriangleIcon size={4} /></SpinnerButton>
        </Spinner>
      </CopiesBox>
    </>
  );
};

const InfoTable = () => (
  <SheetTable $width={sum(infoColumns) + 3} $top={19}>
    <Columns widths={infoColumns} />
    <thead>
      <tr>
        <HeadCell $height={49} $top="d" $left="d">Дата составления</HeadCell>
        <HeadCell $top="d" $left="d">Код вида</HeadCell>
        <HeadCell $top="d" $left="d">{"Структурное \nподразделение"}</HeadCell>
        <HeadCell $top="d" $left="d" $right="d">Вид деятельности</HeadCell>
      </tr>
    </thead>
    <tbody>
      <tr>
        <Cell $height={21} $top="m" $left="m" $bottom="m">01.09.2014</Cell>
        <Cell $top="m" $left="d" $bottom="m" />
        <Cell $top="m" $left="d" $bottom="m" />
        <Cell $top="m" $left="s" $right="m" $bottom="m" />
      </tr>
    </tbody>
  </SheetTable>
);

const IssueTable = () => (
  <SheetTable $width={sum(issueColumns) + 2} $top={25}>
    <Columns widths={issueColumns} />
    <thead>
      <tr>
        <HeadCell $height={35} rowSpan={2} $top="d" $left="s">{"Номер по \nпорядку"}</HeadCell>
        <HeadCell rowSpan={2} $top="d" $left="d">Фамилия, имя, отчество</HeadCell>
        <HeadCell rowSpan={2} $top="d" $left="d">{"Табельный \nномер"}</HeadCell>
        <HeadCell $height={35} colSpan={2} $top="d" $left="d">{"Спецодежда, спецобувь и \nпредохранительные приспособления"}</HeadCell>
        <HeadCell colSpan={2} $top="d" $left="d">Единица измерения</HeadCell>
        <HeadCell rowSpan={2} $top="d" $left="d">Количество</HeadCell>
        <HeadCell rowSpan={2} $top="d" $left="d">{"Дата \nпоступления \nв эксплуатацию"}</HeadCell>
        <HeadCell rowSpan={2} $top="d" $left="d">Срок службы</HeadCell>
        <HeadCell rowSpan={2} $top="d" $left="d" $right="d">{"Подпись \nвполучении \n(сдаче)"}</HeadCell>
      </tr>
      <tr>
        <HeadCell $height={50} $small $top="s" $left="d">Наименование</HeadCell>
        <HeadCell $small $top="s" $left="s">{"Номенкла-\nтурный\n номер"}</HeadCell>
        <HeadCell $small $top="s" $left="d">Код</HeadCell>
        <HeadCell $small $top="s" $left="s">Наименование</HeadCell>
      </tr>
      <tr>
        {numberLefts.map((left, i) => (
          <HeadCell key={i} $height={27} $top="s" $left={left} $right={i === 10 ? "d" : undefined}>
            {i + 1}
          </HeadCell>
        ))}
      </tr>
    </thead>
    <tbody>
      <tr>
        {issueRow.map(({ text, left, line, align }, i) => (
          <Cell key={i} $height={22} $top={line} $bottom={line} $left={left} $right={i === 10 ? "d" : undefined} $align={align}>
            {text}
          </Cell>
        ))}
      </tr>
    </tbody>
  </SheetTable>
);

const PrintedForm = () => (
  <Sheet>
    <FormNote>
      Типовая межотраслевая форма № МБ-7
      <br />
      Утверждена постановлением Госкомстата России
      <br />
      от 30.10.97 № 71а
    </FormNote>
    <SheetTitle>
      ВЕДОМОСТЬ № КП00-000001
      <br />
      учета выдачи спецодежды, спецобуви и
      <br />
      предохранительных приспособлений
    </SheetTitle>
    <Requisites>
      <LineRow>
        <LineLabel $width={115}>Организация</LineLabel>
        <LineValue>
          ООО "Конфетпром", ИНН 7721049904, 109052, Москва г, Рязанский пр-кт, дом № 2, корпус 2, офис 10, тел.: 4957401122, р/с
          <br />
          40702810030050064512, в банке КБ "РОСПРОМБАНК" (ООО), БИК 044552120, к/с 30101810200000000120
        </LineValue>
      </LineRow>
      <CodesTable>
        <tbody>
          <tr>
            <th aria-hidden="true" />
            <td>Коды</td>
          </tr>
          <tr>
            <th scope="row">Форма по ОКУД</th>
            <td>320003</td>
          </tr>
          <tr>
            <th scope="row">по ОКПО</th>
            <td>01846999</td>
          </tr>
        </tbody>
      </CodesTable>
    </Requisites>
    <LineRow>
      <LineLabel $width={235}>Структурное подразделение</LineLabel>
      <LineValue />
    </LineRow>
    <InfoTable />
    <IssueTable />
    <Signatures>
      <SignGroup $columns="176px 160px 167px 154px" $gap={7}>
        <SignLabel>{"Материально\nответственное лицо"}</SignLabel>
        <SignLine>(должность)</SignLine>
        <SignLine>(подпись)</SignLine>
        <SignLine>(расшифровка подписи)</SignLine>
      </SignGroup>
      <SignGroup $columns="115px 171px 141px 168px" $gap={13}>
        <SignLabel>{"Руководитель\nподразделения"}</SignLabel>
        <SignLine>(должность)</SignLine>
        <SignLine>(подпись)</SignLine>
        <SignLine>(расшифровка подписи)</SignLine>
      </SignGroup>
    </Signatures>
    <SheetDate>{'"___"   __________________  20__ г.'}</SheetDate>
  </Sheet>
);

const OpenTabs = () => (
  <TabBar>
    {tabs.map(({ title, width, fixed, active }) => (
      <TabItem key={title} $width={width} $active={active}>
        <TabLabel>{title}</TabLabel>
        {!fixed && (
          <TabClose aria-label="Закрыть">
            <CrossIcon size={7} color="#888" width={1} />
          </TabClose>
        )}
      </TabItem>
    ))}
  </TabBar>
);

const WindowsTaskbar = () => (
  <Taskbar>
    <Streak width="130" height="39" viewBox="0 0 130 39" aria-hidden="true">
      <path d="M28 0h30q38 18 66 39H86Q64 14 28 0z" fill="#8fc0f0" opacity="0.250" />
      <path d="M36 0h17q34 16 60 39H92Q72 14 36 0z" fill="#a9d2fb" opacity="0.500" />
      <path d="M41 0h9q32 16 57 39H96Q76 14 41 0z" fill="#d3e8ff" opacity="0.700" />
    </Streak>
    <TaskButton $width={38} aria-label="Пуск"><StartOrb /></TaskButton>
    <TaskButton $width={58} $gap={14} aria-label="Звук"><SpeakerAppIcon /></TaskButton>
    <TaskButton $open $gap={4} aria-label="Internet Explorer"><ExplorerEIcon /></TaskButton>
    <TaskButton $open $gap={4} aria-label="Проводник"><FolderIcon /></TaskButton>
    <TaskButton $gap={3} aria-label="Проигрыватель"><MediaIcon /></TaskButton>
    <TaskButton $gap={5} aria-label="1С:Предприятие"><OneCIcon size={30} /></TaskButton>
    <TaskButton $gap={4} aria-label="Chrome"><ChromeIcon /></TaskButton>
    <TaskButton $open $active $width={52} $gap={3} aria-label="Чертежи"><CompassIcon /></TaskButton>
    <StackEdge />
    <StackEdge />
    <TaskButton $open $gap={4} aria-label="Excel"><ExcelIcon /></TaskButton>
    <TaskButton $open $width={54} $gap={3} aria-label="Почта"><CrownIcon /></TaskButton>
    <StackEdge />
    <TaskButton $open $width={55} $gap={3} aria-label="Access"><AccessAIcon /></TaskButton>
    <StackEdge />
    <Tray>
      <Language>RU</Language>
      <TrayIcons>
        <TriangleIcon turn={180} size={7} color="#fff" />
        <FlagIcon />
        <NetworkIcon />
        <VolumeIcon />
      </TrayIcons>
      <Clock>
        15:41
        <br />
        03.09.2014
      </Clock>
      <ShowDesktop aria-label="Свернуть все окна" />
    </Tray>
  </Taskbar>
);

const App = () => (
  <Desktop>
    <GlobalStyle />
    <AppWindow>
      <WindowTitle />
      <Workspace>
        <Sidebar>
          <SidebarIcons>
            <IconButton aria-label="Меню"><GridIcon /></IconButton>
            <IconButton aria-label="Избранное"><StarIcon /></IconButton>
            <IconButton aria-label="История"><ScrollIcon /></IconButton>
            <IconButton aria-label="Поиск"><SearchIcon /></IconButton>
          </SidebarIcons>
          <SidebarList>
            {sections.map((name) => (
              <li key={name}>
                <SidebarLink href="#">{name}</SidebarLink>
              </li>
            ))}
          </SidebarList>
        </Sidebar>
        <Main>
          <FormHeader>
            <Button $width={37} aria-label="Начальная страница"><HomeIcon /></Button>
            <NavGroup>
              <NavButton aria-label="Назад"><ArrowIcon color="#333" /></NavButton>
              <NavButton aria-label="Вперед" disabled><ArrowIcon flip color="#b5b5b5" /></NavButton>
            </NavGroup>
            <FormTitle>Печать документов</FormTitle>
            <CloseForm aria-label="Закрыть"><CrossIcon size={8} /></CloseForm>
          </FormHeader>
          <Toolbar>
            <PrintButton $width={97}>
              <PrintCheckIcon />
              Печать
            </PrintButton>
            <Copies />
            <Button $width={26} $pressed aria-label="Редактирование"><TableEditIcon /></Button>
            <ToolbarGap $width={27} />
            <Button $width={117}>Сохранить...</Button>
            <ToolbarGap $width={9} />
            <Button $width={116}>Отправить...</Button>
            <ToolbarGap $grow={60} />
            <Button $width={30} $size={18} aria-label="Сумма">Σ</Button>
            <ToolbarGap $grow={40} />
            <MoreButton $width={86}>
              Еще
              <TriangleIcon size={8} />
            </MoreButton>
            <ToolbarGap $width={9} />
            <Button $width={26} $size={15}>?</Button>
          </Toolbar>
          <Preview>
            <PreviewBody>
              <PreviewScroll>
                <PrintedForm />
              </PreviewScroll>
              <VerticalRail>
                <TriangleIcon turn={180} size={5} color="#ccc" />
                <TriangleIcon size={5} color="#ccc" />
              </VerticalRail>
            </PreviewBody>
            <HorizontalRail>
              <TriangleIcon turn={90} size={6} color="#ccc" />
              <Track>
                <Thumb />
              </Track>
              <TriangleIcon turn={270} size={6} color="#ccc" />
            </HorizontalRail>
          </Preview>
        </Main>
      </Workspace>
      <OpenTabs />
    </AppWindow>
    <WindowsTaskbar />
  </Desktop>
);

export default App;
